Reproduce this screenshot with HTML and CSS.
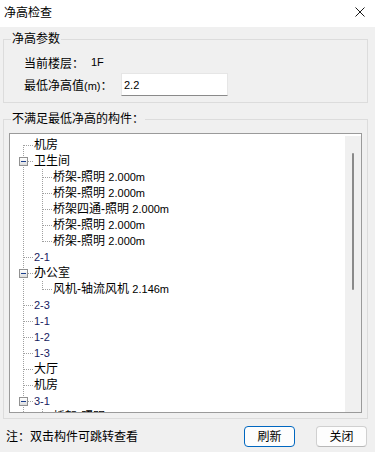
FILE: index.html
```html
<!DOCTYPE html>
<html lang="zh-CN">
<head>
<meta charset="utf-8">
<title>净高检查</title>
<link rel="stylesheet" href="styles.css">
</head>
<body>
<div class="window">
  <div class="titlebar">
    <span class="title">净高检查</span>
    <svg class="close" width="10" height="10" viewBox="0 0 10 10"><path d="M0.5 0.5L9.5 9.5M9.5 0.5L0.5 9.5" stroke="#1a1a1a" stroke-width="1"/></svg>
  </div>
  <div class="content">
    <fieldset class="group group-params">
      <legend>净高参数</legend>
      <div class="param-row row-floor">
        <span class="label label-floor">当前楼层：</span><span class="en">1F</span>
      </div>
      <div class="param-row row-height">
        <span class="label label-height">最低净高值<span class="en">(m)</span>：</span>
        <div class="input"><span class="en">2.2</span></div>
      </div>
    </fieldset>
    <fieldset class="group group-list">
      <legend>不满足最低净高的构件：</legend>
      <div class="treebox">
        <div class="tree">
          <div class="row"><span class="c c-first"></span><span class="txt">机房</span></div>
          <div class="row"><span class="c c-tee"><i class="box"><b></b></i></span><span class="txt">卫生间</span></div>
          <div class="row"><span class="c c-pipe"></span><span class="c c-tee"></span><span class="txt">桥架-照明 <span class="en">2.000m</span></span></div>
          <div class="row"><span class="c c-pipe"></span><span class="c c-tee"></span><span class="txt">桥架-照明 <span class="en">2.000m</span></span></div>
          <div class="row"><span class="c c-pipe"></span><span class="c c-tee"></span><span class="txt">桥架四通-照明 <span class="en">2.000m</span></span></div>
          <div class="row"><span class="c c-pipe"></span><span class="c c-tee"></span><span class="txt">桥架-照明 <span class="en">2.000m</span></span></div>
          <div class="row"><span class="c c-pipe"></span><span class="c c-last"></span><span class="txt">桥架-照明 <span class="en">2.000m</span></span></div>
          <div class="row"><span class="c c-tee"></span><span class="txt num">2-1</span></div>
          <div class="row"><span class="c c-tee"><i class="box"><b></b></i></span><span class="txt">办公室</span></div>
          <div class="row"><span class="c c-pipe"></span><span class="c c-last"></span><span class="txt">风机-轴流风机 <span class="en">2.146m</span></span></div>
          <div class="row"><span class="c c-tee"></span><span class="txt num">2-3</span></div>
          <div class="row"><span class="c c-tee"></span><span class="txt num">1-1</span></div>
          <div class="row"><span class="c c-tee"></span><span class="txt num">1-2</span></div>
          <div class="row"><span class="c c-tee"></span><span class="txt num">1-3</span></div>
          <div class="row"><span class="c c-tee"></span><span class="txt">大厅</span></div>
          <div class="row"><span class="c c-tee"></span><span class="txt">机房</span></div>
          <div class="row"><span class="c c-tee"><i class="box"><b></b></i></span><span class="txt num">3-1</span></div>
          <div class="row"><span class="c c-pipe"></span><span class="c c-tee"></span><span class="txt">桥架-照明 <span class="en">2.000m</span></span></div>
        </div>
        <div class="scrollbar"><div class="thumb"></div></div>
      </div>
    </fieldset>
    <div class="footer">
      <span class="note">注：双击构件可跳转查看</span>
      <div class="buttons">
        <button class="btn btn-default" type="button">刷新</button>
        <button class="btn" type="button">关闭</button>
      </div>
    </div>
  </div>
</div>
</body>
</html>
```
FILE: styles.css
```css
:root {
  --dot: #a0a0a0;
  --vline: repeating-linear-gradient(to bottom, var(--dot) 0 1px, transparent 1px 2px);
  --hline: repeating-linear-gradient(to right, var(--dot) 0 1px, transparent 1px 2px);
}

* { box-sizing: border-box; }

html, body {
  margin: 0;
  padding: 0;
  background: #f0f0f0;
}

body {
  font-family: "Liberation Sans", "Noto Sans CJK SC", sans-serif;
  font-size: 12px;
  color: #000;
}

.window {
  width: 375px;
  height: 452px;
  background: #f0f0f0;
  overflow: hidden;
}

.titlebar {
  height: 27px;
  background: #fff;
  display: flex;
  align-items: center;
  justify-content: space-between;
  padding: 0 10px 0 4px;
}

.title {
  font-size: 12px;
  line-height: 16px;
  margin-top: -2px;
}

.close {
  display: block;
  margin-top: -4px;
}

.content {
  padding: 4px 8px 0 3px;
}

.en {
  font-size: 11px;
}

.group {
  margin: 0;
  border: 1px solid #dcdcdc;
  padding: 0 5px;
  width: 365px;
}

.group legend {
  padding: 0 1px;
  margin-left: 2px;
  line-height: 16px;
  font-size: 12px;
}

.group-params {
  padding-bottom: 6px;
}

.param-row {
  display: flex;
  align-items: center;
  padding-left: 15px;
}

.row-floor {
  margin-top: 7px;
  height: 16px;
}

.row-height {
  margin-top: 3px;
}

.label-floor {
  width: 67px;
}

.label-height {
  width: 97px;
}

.input {
  width: 107px;
  height: 23px;
  background: #fff;
  border: 1px solid #e6e6e6;
  border-bottom-color: #8a8a8a;
  padding-left: 2px;
  display: flex;
  align-items: center;
}

.group-list {
  margin-top: 8px;
  padding-bottom: 5px;
}

.treebox {
  margin-top: 6px;
  height: 280px;
  border: 1px solid #9a9a9a;
  background: #fff;
  display: flex;
}

.tree {
  flex: 1;
  overflow: hidden;
  padding: 3px 0 0 4px;
}

.row {
  display: flex;
  height: 16px;
  white-space: nowrap;
}

.c {
  flex: none;
  width: 19px;
  height: 16px;
  background-repeat: no-repeat;
}

.c-first {
  background-image: var(--vline), var(--hline);
  background-size: 1px 8px, 9px 1px;
  background-position: 9px 8px, 10px 8px;
}

.c-tee {
  background-image: var(--vline), var(--hline);
  background-size: 1px 16px, 9px 1px;
  background-position: 9px 0, 10px 8px;
}

.c-last {
  background-image: var(--vline), var(--hline);
  background-size: 1px 9px, 9px 1px;
  background-position: 9px 0, 10px 8px;
}

.c-pipe {
  background-image: var(--vline);
  background-size: 1px 16px;
  background-position: 9px 0;
}

.box {
  display: flex;
  align-items: center;
  justify-content: center;
  width: 9px;
  height: 9px;
  margin: 4px 0 0 5px;
  border: 1px solid #919191;
  background: linear-gradient(#ffffff, #dcdcdc);
}

.box b {
  display: block;
  width: 5px;
  height: 1px;
  background: #1c3f8c;
}

.txt {
  margin-left: 1px;
  line-height: 16px;
  font-size: 12px;
}

.num {
  font-size: 11px;
  color: #16215f;
}

.scrollbar {
  flex: none;
  width: 16px;
  margin-top: 2px;
  background: #f0f0f0;
  padding: 17px 0 0 7px;
}

.thumb {
  width: 2px;
  height: 137px;
  border-radius: 1px;
  background: #8a8a8a;
}

.footer {
  display: flex;
  align-items: center;
  justify-content: space-between;
  margin-top: 7px;
  height: 21px;
  padding-left: 3px;
}

.note {
  font-size: 12px;
  line-height: 16px;
}

.buttons {
  display: flex;
  gap: 21px;
}

.btn {
  width: 51px;
  height: 21px;
  padding: 0;
  font-family: "Liberation Sans", "Noto Sans CJK SC", sans-serif;
  font-size: 12px;
  line-height: 16px;
  color: #000;
  background: #fdfdfd;
  border: 1px solid #d0d0d0;
  border-bottom-color: #b8b8b8;
  border-radius: 4px;
}

.btn-default {
  border: 1px solid #0067c0;
  background: #fdfdfd;
}
```
